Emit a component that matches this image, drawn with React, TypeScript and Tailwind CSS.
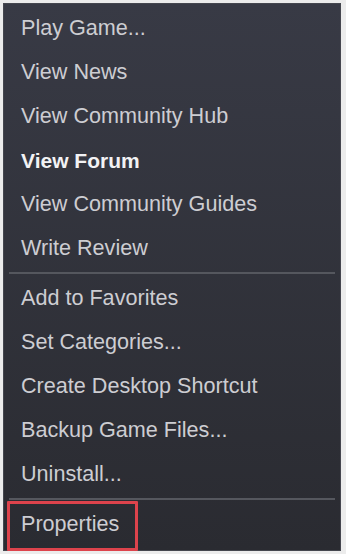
import React from "react";

const group1 = ["Play Game...", "View News", "View Community Hub", "View Forum", "View Community Guides", "Write Review"];
const group2 = ["Add to Favorites", "Set Categories...", "Create Desktop Shortcut", "Backup Game Files...", "Uninstall..."];

function Item({ label }: { label: string }) {
  const bold = label === "View Forum";
  return (
    <div
      className={`h-[44px] flex items-center pl-[17px] leading-none ${
        bold ? "text-[21px] font-bold text-[#f2f2f4]" : "text-[21.6px] text-[#cdcdd2]"
      }`}
    >
      {label}
    </div>
  );
}

function Sep() {
  return <div className="mx-[5px] my-[2px] h-[2px] bg-[#55575e]" />;
}

export default function App() {
  return (
    <div
      className="w-[346px] h-[554px] bg-[#ececec] pt-[3px] pl-[3px] pr-[5px] pb-[3px]"
      style={{ fontFamily: '"Liberation Sans", Arial, sans-serif' }}
    >
      <div className="relative h-full border border-[#45474f] bg-gradient-to-b from-[#383a45] to-[#2a2b31] pt-[2px] flex flex-col">
        {group1.map((l) => (
          <Item key={l} label={l} />
        ))}
        <Sep />
        {group2.map((l) => (
          <Item key={l} label={l} />
        ))}
        <Sep />
        <div className="relative">
          <Item label="Properties" />
          <div className="absolute left-[3px] top-[-1px] w-[131px] h-[50px] border-[3px] border-[#dd434c] rounded-[1px]" />
        </div>
      </div>
    </div>
  );
}
